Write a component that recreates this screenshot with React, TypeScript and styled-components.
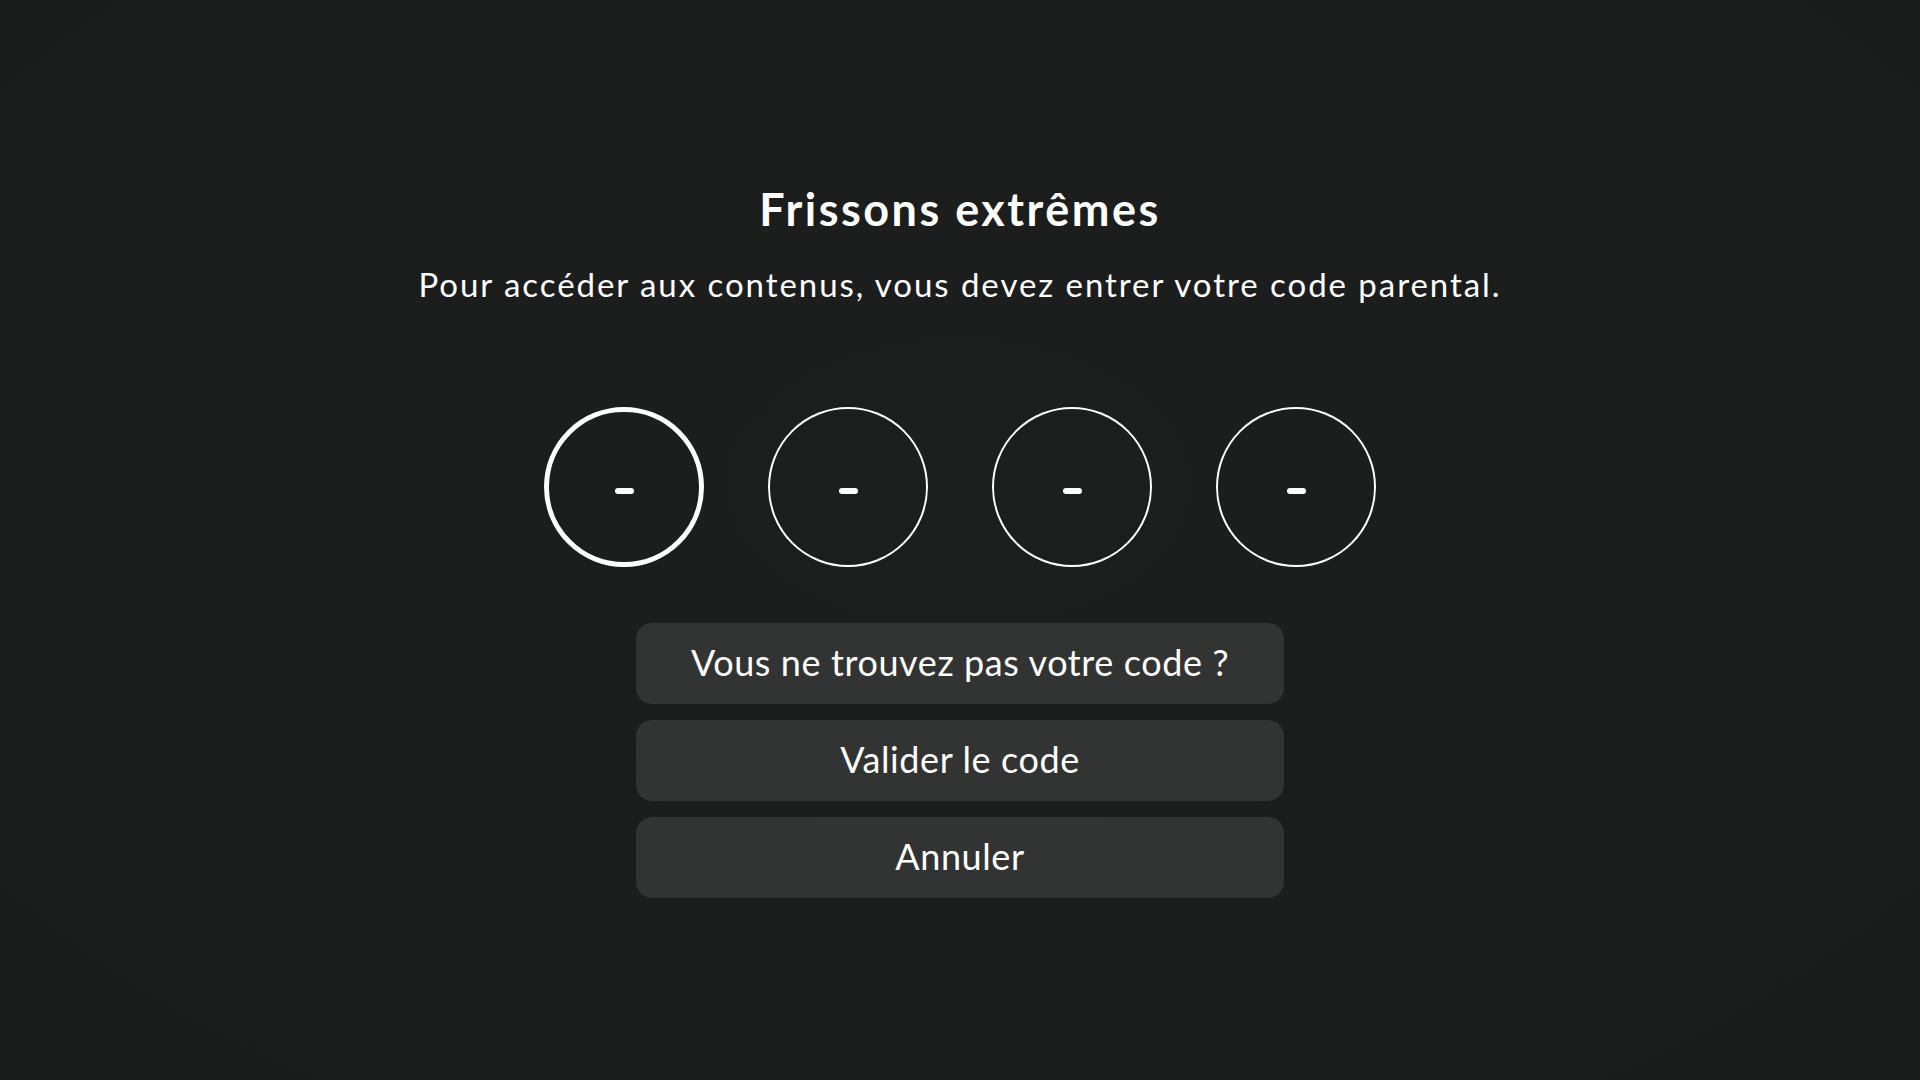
import styled, { createGlobalStyle } from "styled-components";

const GlobalStyle = createGlobalStyle`
    html, body {
        margin: 0;
        padding: 0;
        background: #1c1d1d;
        font-family: Lato, "Noto Sans", sans-serif;
        color: #ffffff;
    }
`;

const Screen = styled.main`
    width: 1920px;
    height: 1080px;
    box-sizing: border-box;
    padding-top: 183px;
    display: flex;
    flex-direction: column;
    align-items: center;
    background: radial-gradient(ellipse at 50% 45%, #1d1e1e 0%, #1b1c1c 70%, #1a1b1b 100%);
`;

const Title = styled.h1`
    margin: 0;
    font-size: 45px;
    line-height: 52px;
    font-weight: 700;
    letter-spacing: 2.5px;
`;

const Subtitle = styled.p`
    margin: 29px 0 0;
    font-size: 33px;
    line-height: 40px;
    font-weight: 400;
    letter-spacing: 1.95px;
`;

const CodeRow = styled.div`
    margin-top: 103px;
    display: flex;
    gap: 64px;
`;

const Digit = styled.div<{ $active?: boolean }>`
    width: 160px;
    height: 160px;
    box-sizing: border-box;
    border-radius: 50%;
    border: ${(p) => (p.$active ? "5px" : "2px")} solid #ffffff;
    display: flex;
    align-items: center;
    justify-content: center;
`;

const Dash = styled.span`
    width: 19px;
    height: 6px;
    margin-top: 8px;
    border-radius: 3px;
    background: #ffffff;
`;

const Actions = styled.div`
    margin-top: 56px;
    width: 648px;
    display: flex;
    flex-direction: column;
    gap: 16px;
`;

const ActionButton = styled.button`
    height: 81px;
    padding: 0 0 4px;
    border: none;
    border-radius: 16px;
    background: #323333;
    color: #ffffff;
    font-family: Lato, "Noto Sans", sans-serif;
    font-size: 36px;
    font-weight: 400;
    letter-spacing: 0.6px;
    cursor: pointer;
`;

const digits = [0, 1, 2, 3];
const actions = ["Vous ne trouvez pas votre code ?", "Valider le code", "Annuler"];

function App() {
    return (
        <>
            <GlobalStyle />
            <Screen>
                <Title>Frissons extrêmes</Title>
                <Subtitle>Pour accéder aux contenus, vous devez entrer votre code parental.</Subtitle>
                <CodeRow>
                    {digits.map((d) => (
                        <Digit key={d} $active={d === 0}>
                            <Dash />
                        </Digit>
                    ))}
                </CodeRow>
                <Actions>
                    {actions.map((label) => (
                        <ActionButton key={label}>{label}</ActionButton>
                    ))}
                </Actions>
            </Screen>
        </>
    );
}

export default App;
